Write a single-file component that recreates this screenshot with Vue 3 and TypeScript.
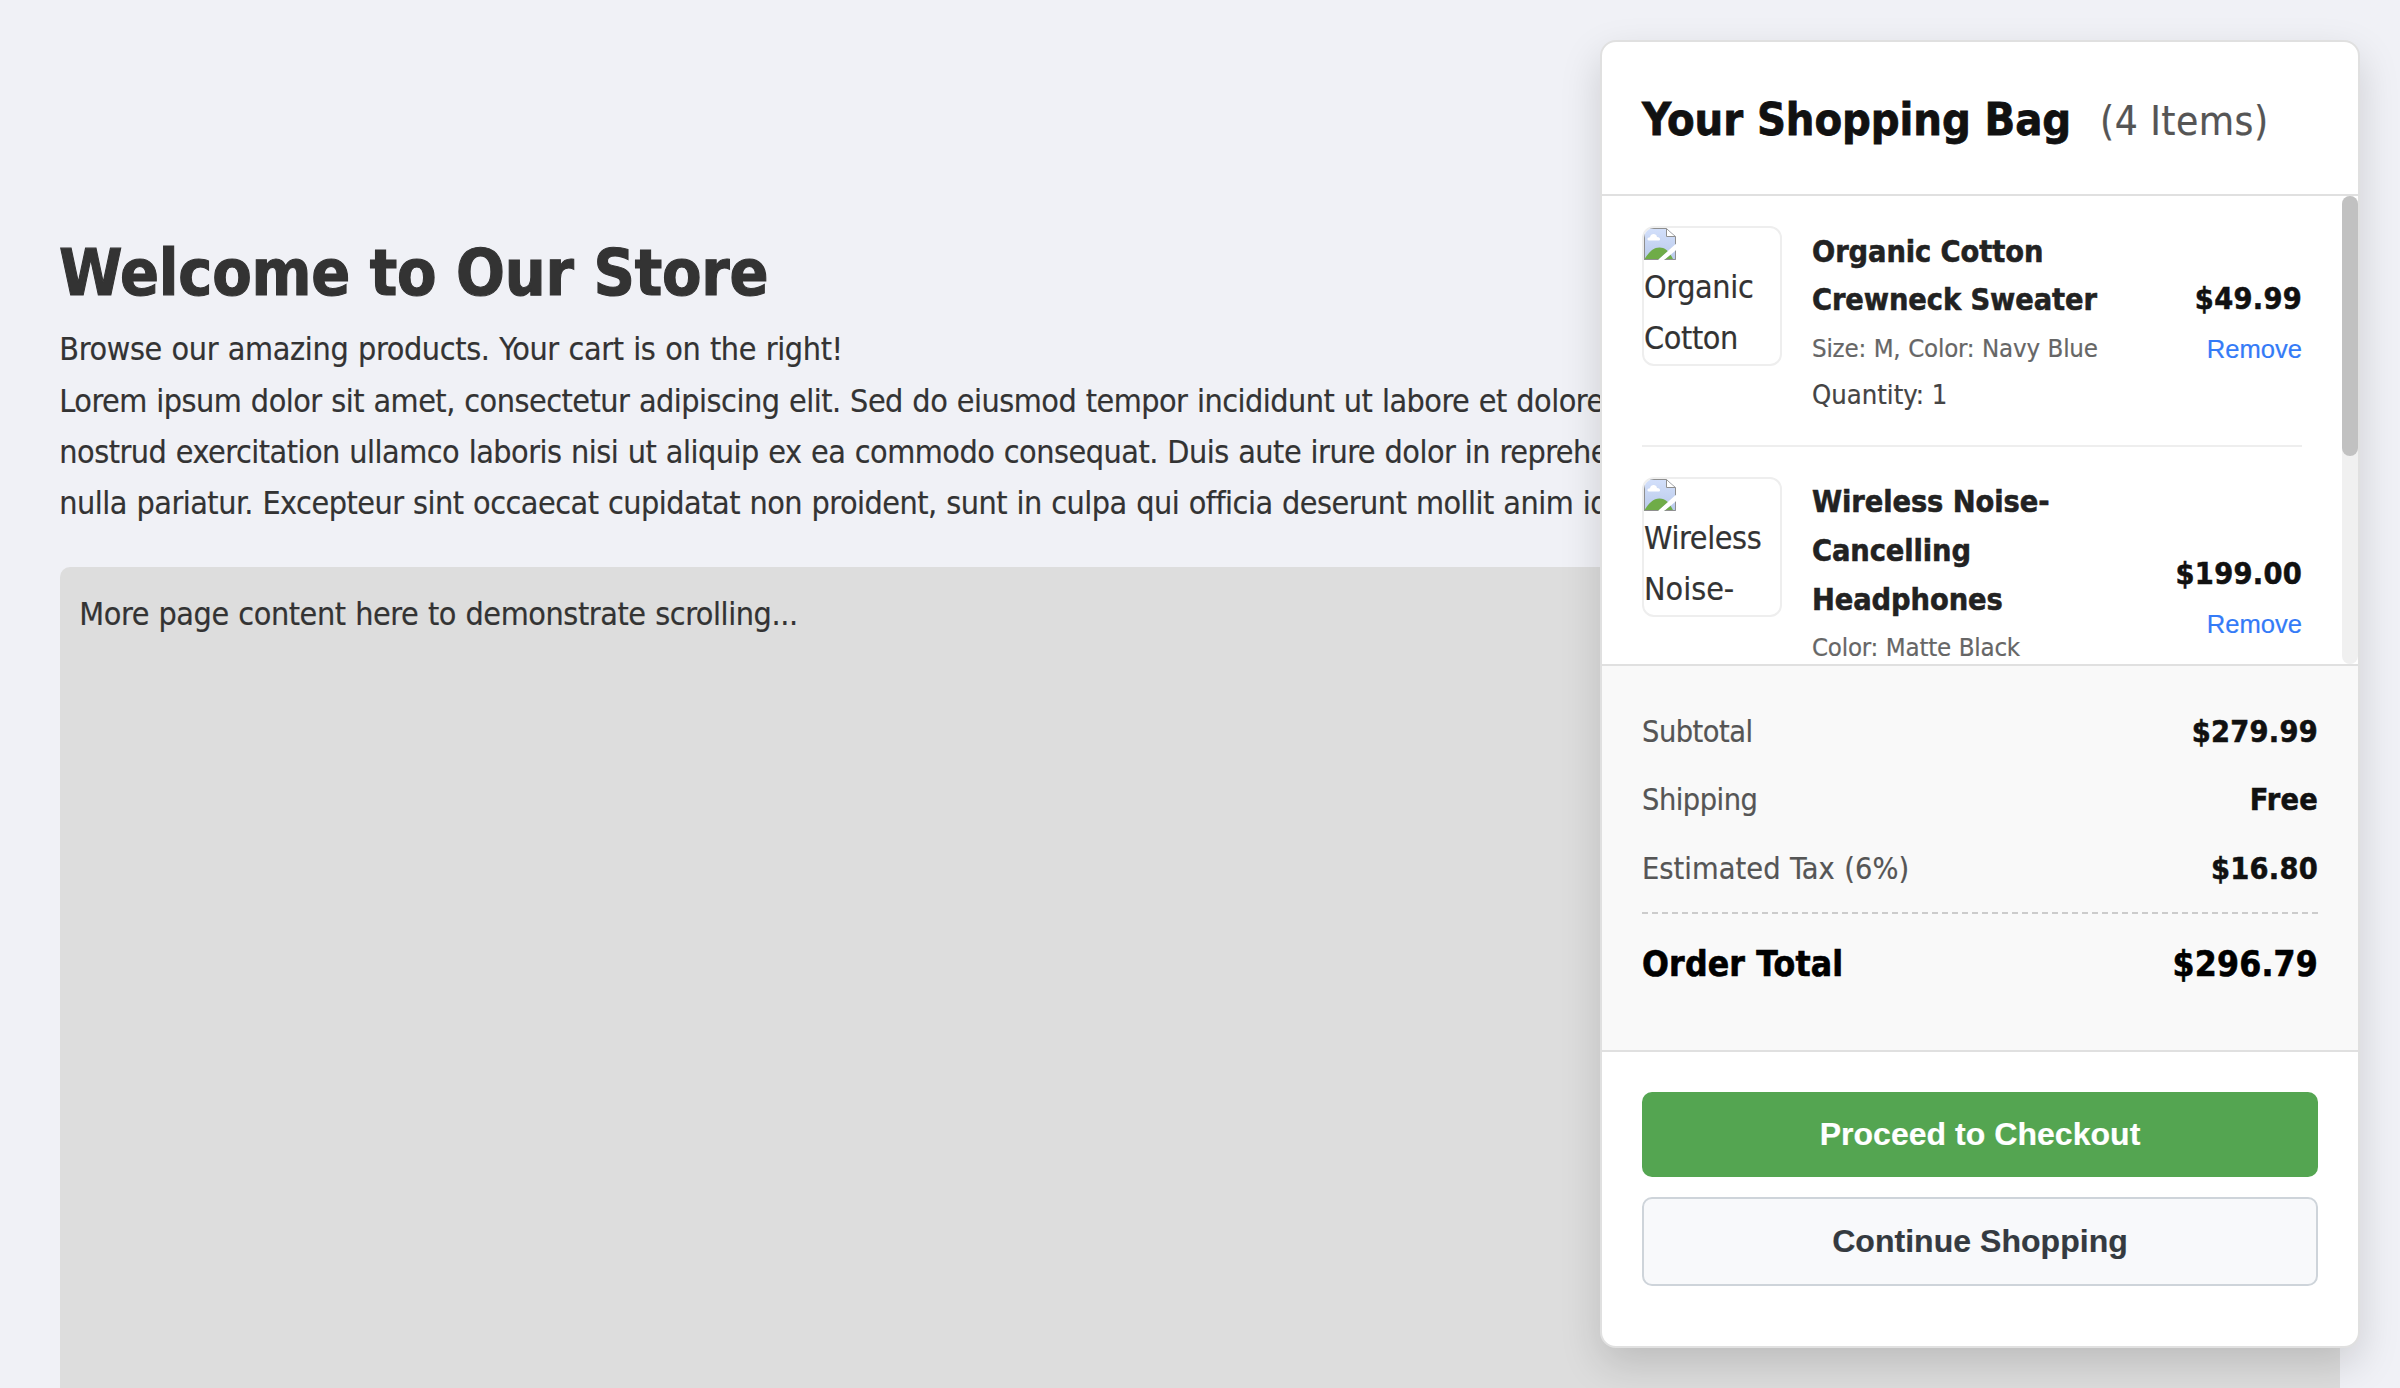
<script setup lang="ts">
interface CartItem {
  name: string[]
  alt: string[]
  variant: string
  quantity: number
  price: string
}

interface SummaryRow {
  label: string
  value: string
  cls: string
}

const items: CartItem[] = [
  {
    name: ['Organic Cotton', 'Crewneck Sweater'],
    alt: ['Organic', 'Cotton'],
    variant: 'Size: M, Color: Navy Blue',
    quantity: 1,
    price: '$49.99',
  },
  {
    name: ['Wireless Noise-', 'Cancelling', 'Headphones'],
    alt: ['Wireless', 'Noise-'],
    variant: 'Color: Matte Black',
    quantity: 1,
    price: '$199.00',
  },
]

const summary: SummaryRow[] = [
  { label: 'Subtotal', value: '$279.99', cls: 'tight' },
  { label: 'Shipping', value: 'Free', cls: 'tight' },
  { label: 'Estimated Tax (6%)', value: '$16.80', cls: 'wide' },
]

const lorem: string[] = [
  'Lorem ipsum dolor sit amet, consectetur adipiscing elit. Sed do eiusmod tempor incididunt ut labore et dolore magna aliqua. Ut enim ad minim veniam, quis',
  'nostrud exercitation ullamco laboris nisi ut aliquip ex ea commodo consequat. Duis aute irure dolor in reprehenderit in voluptate velit esse cillum dolore eu fugiat',
  'nulla pariatur. Excepteur sint occaecat cupidatat non proident, sunt in culpa qui officia deserunt mollit anim id est laborum.',
]
</script>

<template>
  <div class="page">
    <main class="content">
      <h1 class="t">Welcome to Our Store</h1>
      <p class="t intro">Browse our amazing products. Your cart is on the right!</p>
      <p class="t lorem"><span v-for="line in lorem" :key="line">{{ line }}</span></p>
      <section class="filler">
        <p class="t">More page content here to demonstrate scrolling...</p>
      </section>
    </main>

    <aside class="cart">
      <header class="head">
        <h2 class="t">Your Shopping Bag</h2>
        <span class="t count">(4 Items)</span>
      </header>

      <div class="list-wrap">
        <ul class="list">
          <li v-for="item in items" :key="item.price" class="item">
            <div class="thumb">
              <svg width="32" height="32" viewBox="0 0 32 32">
                <defs>
                  <linearGradient id="sky" x1="0" y1="0" x2="0" y2="1">
                    <stop offset="0" stop-color="#d3e0fb" />
                    <stop offset="1" stop-color="#b9c9ea" />
                  </linearGradient>
                  <clipPath id="sheet">
                    <path d="M0 0H22.5L32 8.5V15.7L13.7 32H0ZM32 22.3V32H20.3Z" />
                  </clipPath>
                </defs>
                <g clip-path="url(#sheet)">
                  <rect width="32" height="32" fill="url(#sky)" />
                  <path d="M0 32C4.5 24.5 9 19.5 15.5 19.5S25.5 24 29.5 32Z" fill="#6fac48" />
                  <path d="M5.5 12.6C2.6 12.6 2.8 9.4 6 9.3C6.6 5.2 12.4 5 13 9C16.6 9 17 12.6 14.5 12.6Z" fill="#fff" />
                  <path d="M22 0V8.5H32V0Z" fill="#fff" />
                  <path d="M0 .5H22.5V8.5H31.5V31.5H.5V0M22.5 .5L31.5 8.5" fill="none" stroke="#8f8f8f" stroke-width="1" />
                </g>
              </svg>
              <span v-for="word in item.alt" :key="word" :class="{ dash: word === 'Noise-' }">{{ word }}</span>
            </div>
            <div class="details">
              <p class="t name"><span v-for="part in item.name" :key="part">{{ part }}</span></p>
              <p class="t variant">{{ item.variant }}</p>
              <p class="t quantity">Quantity: {{ item.quantity }}</p>
            </div>
            <div class="side">
              <span class="t price">{{ item.price }}</span>
              <button type="button" class="remove">Remove</button>
            </div>
          </li>
        </ul>
        <div class="track"><div class="handle"></div></div>
      </div>

      <section class="summary">
        <div v-for="row in summary" :key="row.label" class="row">
          <span class="t" :class="row.cls">{{ row.label }}</span>
          <strong class="t">{{ row.value }}</strong>
        </div>
        <div class="total">
          <span class="t">Order Total</span>
          <span class="t">$296.79</span>
        </div>
      </section>

      <footer class="actions">
        <button type="button" class="btn primary">Proceed to Checkout</button>
        <button type="button" class="btn secondary">Continue Shopping</button>
      </footer>
    </aside>
  </div>
</template>

<style>
body {
  margin: 0;
  background: #f0f1f6;
}
</style>

<style scoped>
.page {
  position: relative;
  box-sizing: border-box;
  height: 1388px;
  overflow: hidden;
  padding: 218.4px 60px 0;
  background: #f0f1f6;
  color: #333;
  font-family: 'DejaVu Sans Condensed', 'DejaVu Sans', Tahoma, sans-serif;
  font-size: 32px;
  line-height: 1.6;
  white-space: nowrap;
  -webkit-text-stroke-width: 0.2px;
}
h1, h2, p, ul {
  margin: 0;
  padding: 0;
}
/* lowers the baseline inside the line box without changing the row height */
.t {
  padding-top: 0.05em;
  margin-bottom: -0.05em;
}
h1, h2, .name, .price, .row strong, .total {
  -webkit-text-stroke-width: 0.017em;
}
h1 {
  font-size: 64px;
  letter-spacing: -0.004em;
  text-indent: -1px;
}
.intro {
  margin-top: 2px;
  letter-spacing: -0.011em;
  word-spacing: 0.026em;
}
.intro, .lorem, .filler .t {
  text-indent: -0.7px;
}
.lorem {
  letter-spacing: -0.0155em;
  word-spacing: 0.026em;
}
.lorem span, .name span, .thumb span {
  display: block;
}
.filler {
  height: 1600px;
  margin-top: 39.6px;
  padding: 20px;
  background: #ddd;
  border-radius: 10px;
  letter-spacing: -0.013em;
  word-spacing: 0.026em;
}

.cart {
  position: absolute;
  top: 40px;
  right: 40px;
  box-sizing: border-box;
  width: 760px;
  height: 1308px;
  display: flex;
  flex-direction: column;
  overflow: hidden;
  background: #fff;
  border: 2px solid #e0e0e0;
  border-radius: 16px;
  box-shadow: 0 16px 40px rgba(0, 0, 0, 0.15);
}
.head {
  box-sizing: border-box;
  height: 154px;
  flex: none;
  display: flex;
  align-items: baseline;
  padding: 39.5px 40px 0;
  border-bottom: 2px solid #e0e0e0;
}
h2 {
  font-size: 44.8px;
  color: #111;
  letter-spacing: -0.002em;
}
.count {
  margin-left: 29px;
  font-size: 40.32px;
  color: #555;
  letter-spacing: 0.0115em;
}

.list-wrap {
  display: flex;
  height: 468px;
  flex: none;
  overflow: hidden;
}
.list {
  flex: 1;
  padding: 0 40px;
  list-style: none;
}
.item {
  display: flex;
  align-items: center;
  padding: 30px 0 29.2px;
  border-bottom: 2px solid #eee;
}
.thumb {
  box-sizing: border-box;
  width: 140px;
  height: 140px;
  margin-right: 30px;
  align-self: flex-start;
  overflow: hidden;
  border: 2px solid #eee;
  border-radius: 12px;
  letter-spacing: -0.0115em;
}
.thumb svg {
  display: block;
  margin-bottom: 2px;
}
.thumb .dash {
  letter-spacing: 0;
}
.details {
  flex: 1;
}
.name {
  font-size: 30.4px;
  font-weight: 700;
  color: #222;
  letter-spacing: -0.003em;
}
.variant {
  margin-top: 3px;
  font-size: 25.6px;
  color: #666;
  letter-spacing: -0.0085em;
  word-spacing: 0.026em;
}
.quantity {
  margin-top: 4.1px;
  margin-bottom: -0.6px;
  font-size: 27.2px;
  color: #444;
}
.side {
  display: flex;
  flex-direction: column;
  align-items: flex-end;
}
.price {
  font-size: 30.4px;
  font-weight: 700;
  color: #111;
  letter-spacing: 0.009em;
}
.remove {
  margin: 7.5px 0 0;
  padding: 4.3px 0;
  border: 0;
  background: none;
  color: #347bf7;
  font: 25.6px/30px 'Liberation Sans', Arial, sans-serif;
}
.track {
  width: 16px;
  flex: none;
  background: #f0f0f0;
  border-radius: 8px;
}
.handle {
  height: 260px;
  background: #c1c1c1;
  border-radius: 8px;
}

.summary {
  box-sizing: border-box;
  height: 388px;
  flex: none;
  padding: 40px 40px 0;
  background: #f9f9f9;
  border-top: 2px solid #e0e0e0;
  border-bottom: 2px solid #e0e0e0;
}
.row {
  display: flex;
  justify-content: space-between;
  height: 48.64px;
  margin-bottom: 20px;
  font-size: 30.4px;
  color: #555;
}
.tight {
  letter-spacing: -0.016em;
}
.wide {
  letter-spacing: 0.0015em;
  word-spacing: 0.026em;
}
.row strong {
  color: #111;
  letter-spacing: 0.008em;
}
.total {
  display: flex;
  justify-content: space-between;
  padding-top: 20px;
  border-top: 2px dashed #ccc;
  font-size: 35.2px;
  font-weight: 700;
  color: #000;
  letter-spacing: 0.005em;
}

.actions {
  display: flex;
  flex-direction: column;
  gap: 20px;
  padding: 40px;
}
.btn {
  box-sizing: border-box;
  width: 100%;
  border-radius: 10px;
  font: 700 32px/37px 'Liberation Sans', Arial, sans-serif;
  letter-spacing: 0.001em;
}
.primary {
  height: 85px;
  padding: 24px 0;
  border: 0;
  background: #54a551;
  color: #fff;
}
.secondary {
  height: 89px;
  padding: 24px 0;
  border: 2px solid #ced4da;
  background: #f8f9fb;
  color: #343a40;
}
</style>
